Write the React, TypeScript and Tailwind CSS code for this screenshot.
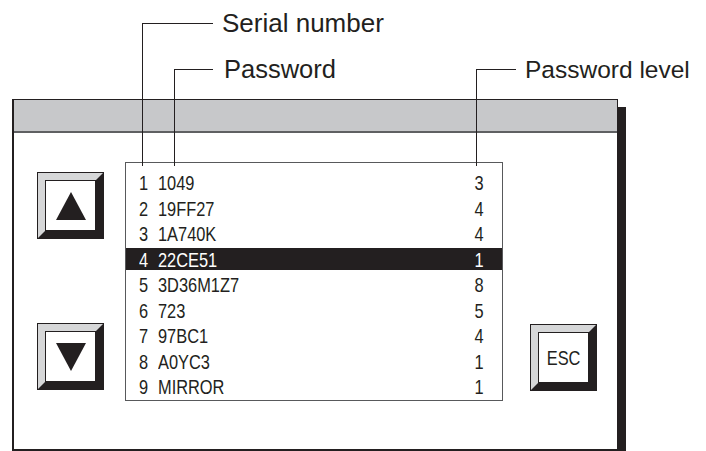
import React from "react"

const rows = [
  { n: 1, pw: "1049", level: 3 },
  { n: 2, pw: "19FF27", level: 4 },
  { n: 3, pw: "1A740K", level: 4 },
  { n: 4, pw: "22CE51", level: 1 },
  { n: 5, pw: "3D36M1Z7", level: 8 },
  { n: 6, pw: "723", level: 5 },
  { n: 7, pw: "97BC1", level: 4 },
  { n: 8, pw: "A0YC3", level: 1 },
  { n: 9, pw: "MIRROR", level: 1 },
]

// condensed look: Arial metrics squeezed horizontally
const sans = "font-['Liberation_Sans',Arial,sans-serif]"

function BevelButton({ children }: { children: React.ReactNode }) {
  return (
    <div className="h-[67px] w-[67px] border border-[#231f20]">
      <div className="h-full w-full border-[7px] border-t-[#d6d7d8] border-l-[#d6d7d8] border-r-[#231f20] border-b-[#231f20]">
        <div className="flex h-full w-full items-center justify-center border border-[#231f20] bg-white">
          {children}
        </div>
      </div>
    </div>
  )
}

function Triangle({ down }: { down?: boolean }) {
  return (
    <svg width="30" height="28" viewBox="0 0 30 28">
      {down ? <polygon points="0,0 30,0 15,28" fill="#231f20" /> : <polygon points="15,0 30,28 0,28" fill="#231f20" />}
    </svg>
  )
}

export default function App() {
  return (
    <div className="relative h-[451px] w-[706px] overflow-hidden bg-white text-[#231f20]">
      <div className="ml-[12px] mt-[99px] h-[352px] w-[606px] border-2 border-[#231f20] border-r border-t bg-white shadow-[8px_8px_0_#231f20]">
        <div className="h-[33px] border-b-2 border-[#5f6062] bg-[#c7c8ca]" />

        <div className="flex pl-[23px] pt-[29px]">
          <div className="flex w-[67px] flex-col gap-[84px] pt-[10px]">
            <BevelButton><Triangle /></BevelButton>
            <BevelButton><Triangle down /></BevelButton>
          </div>

          <div className={`ml-[21px] h-[239px] w-[378px] border border-[#58595b] pt-[7px] ${sans} text-[21px] leading-none`}>
            {rows.map((r) => (
              <div key={r.n} className="flex h-[25.5px] items-center">
                <div className={`flex h-[22px] w-full items-center pl-[13px] pr-[18px] ${r.n === 4 ? "bg-[#231f20] text-white" : ""}`}>
                  <span className="w-[19px]"><span className="inline-block origin-left scale-x-[0.78]">{r.n}</span></span>
                  <span className="flex-1"><span className="inline-block origin-left scale-x-[0.78]">{r.pw}</span></span>
                  <span className="inline-block origin-right scale-x-[0.78]">{r.level}</span>
                </div>
              </div>
            ))}
          </div>

          <div className="ml-[27px] pt-[162px]">
            <BevelButton>
              <span className={`inline-block scale-x-[0.78] ${sans} text-[21px]`}>ESC</span>
            </BevelButton>
          </div>
        </div>
      </div>

      {/* callouts */}
      <div className="absolute left-[142px] top-[23px] h-[143px] w-[71px] border-l border-t border-[#231f20]" />
      <div className="absolute left-[174px] top-[69px] h-[97px] w-[39px] border-l border-t border-[#231f20]" />
      <div className="absolute left-[476px] top-[69px] h-[97px] w-[40px] border-l border-t border-[#231f20]" />
      <div className={`absolute left-[222px] top-[10px] ${sans} text-[26px] leading-[26px]`}>Serial number</div>
      <div className={`absolute left-[224px] top-[56px] ${sans} text-[25.5px] leading-[26px]`}>Password</div>
      <div className={`absolute left-[525px] top-[57px] ${sans} text-[24.5px] leading-[25px]`}>Password level</div>
    </div>
  )
}
